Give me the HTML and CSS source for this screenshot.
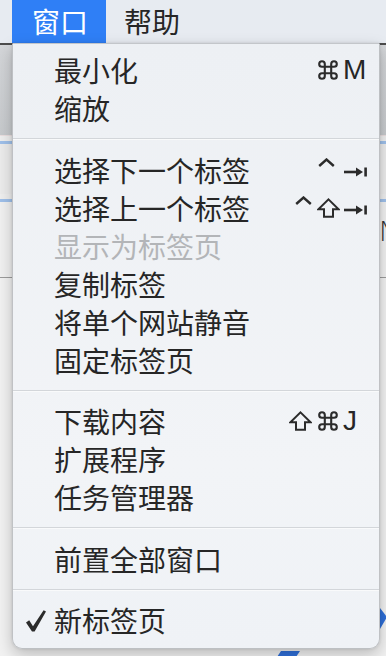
FILE: index.html
```html
<!DOCTYPE html>
<html lang="zh-CN">
<head>
<meta charset="utf-8">
<title>窗口菜单</title>
<link rel="stylesheet" href="styles.css">
</head>
<body>
<div class="menubar">
  <div class="mb-item active">窗口</div>
  <div class="mb-item">帮助</div>
</div>
<div class="window">
  <div class="toolbar"></div>
  <div class="tabline"></div>
  <div class="tabs"></div>
  <div class="tabline"></div>
  <div class="addr"><span class="ghost">N</span></div>
  <div class="divider"></div>
  <div class="page"></div>
  <svg class="deco" width="386" height="612" viewBox="0 0 386 612">
    <path d="M380 563 L387 572 L380 584 Z" fill="#2f6fd8"/>
    <path d="M281 606 L300 606 L296 612 L277 612 Z" fill="#2f6fd8"/>
  </svg>
</div>

<div class="menu">
  <div class="item"><span class="gutter"></span><span class="label">最小化</span>
    <span class="sc">
      <span class="mods">
        <svg class="i-cmd" width="20" height="20" viewBox="0 0 20 20"><path d="M6.8 6.8 V4 A2.8 2.8 0 1 0 4 6.8 H16 A2.8 2.8 0 1 0 13.2 4 V16 A2.8 2.8 0 1 0 16 13.2 H4 A2.8 2.8 0 1 0 6.8 16 Z" fill="none" stroke="#2b2b2b" stroke-width="2.1"/></svg>
      </span>
      <span class="key">M</span>
    </span>
  </div>
  <div class="item"><span class="gutter"></span><span class="label">缩放</span></div>
  <div class="sep"></div>
  <div class="item"><span class="gutter"></span><span class="label">选择下一个标签</span>
    <span class="sc">
      <span class="mods">
        <svg class="i-ctrl" width="17" height="9" viewBox="0 0 17 9"><polyline points="1.2,8 8.5,1.5 15.8,8" fill="none" stroke="#2b2b2b" stroke-width="2.4"/></svg>
      </span>
      <span class="key">
        <svg class="i-tab" width="23" height="10" viewBox="0 0 23 10"><path d="M0 5 H14" stroke="#2b2b2b" stroke-width="2.6"/><path d="M12 0.6 L19 5 L12 9.4 Z" fill="#2b2b2b"/><rect x="20.3" y="0.5" width="2.6" height="9" fill="#2b2b2b"/></svg>
      </span>
    </span>
  </div>
  <div class="item"><span class="gutter"></span><span class="label">选择上一个标签</span>
    <span class="sc">
      <span class="mods">
        <svg class="i-ctrl" width="17" height="9" viewBox="0 0 17 9"><polyline points="1.2,8 8.5,1.5 15.8,8" fill="none" stroke="#2b2b2b" stroke-width="2.4"/></svg>
        <svg class="i-shift" width="23" height="20" viewBox="0 0 23 20"><path d="M11.5 1.4 L21.6 11.3 H16 V18.8 H7 V11.3 H1.4 Z" fill="none" stroke="#2b2b2b" stroke-width="2"/></svg>
      </span>
      <span class="key">
        <svg class="i-tab" width="23" height="10" viewBox="0 0 23 10"><path d="M0 5 H14" stroke="#2b2b2b" stroke-width="2.6"/><path d="M12 0.6 L19 5 L12 9.4 Z" fill="#2b2b2b"/><rect x="20.3" y="0.5" width="2.6" height="9" fill="#2b2b2b"/></svg>
      </span>
    </span>
  </div>
  <div class="item disabled"><span class="gutter"></span><span class="label">显示为标签页</span></div>
  <div class="item"><span class="gutter"></span><span class="label">复制标签</span></div>
  <div class="item"><span class="gutter"></span><span class="label">将单个网站静音</span></div>
  <div class="item"><span class="gutter"></span><span class="label">固定标签页</span></div>
  <div class="sep"></div>
  <div class="item"><span class="gutter"></span><span class="label">下载内容</span>
    <span class="sc">
      <span class="mods">
        <svg class="i-shift before-cmd" width="23" height="20" viewBox="0 0 23 20"><path d="M11.5 1.4 L21.6 11.3 H16 V18.8 H7 V11.3 H1.4 Z" fill="none" stroke="#2b2b2b" stroke-width="2"/></svg>
        <svg class="i-cmd" width="20" height="20" viewBox="0 0 20 20"><path d="M6.8 6.8 V4 A2.8 2.8 0 1 0 4 6.8 H16 A2.8 2.8 0 1 0 13.2 4 V16 A2.8 2.8 0 1 0 16 13.2 H4 A2.8 2.8 0 1 0 6.8 16 Z" fill="none" stroke="#2b2b2b" stroke-width="2.1"/></svg>
      </span>
      <span class="key">J</span>
    </span>
  </div>
  <div class="item"><span class="gutter"></span><span class="label">扩展程序</span></div>
  <div class="item"><span class="gutter"></span><span class="label">任务管理器</span></div>
  <div class="sep"></div>
  <div class="item"><span class="gutter"></span><span class="label">前置全部窗口</span></div>
  <div class="sep"></div>
  <div class="item"><span class="gutter"><svg class="check" width="22" height="24" viewBox="0 0 22 24"><path d="M1 13.5 L4.2 11.2 L8 17.2 L18.6 1.2 L21 2.4 L9.6 22.4 L7 22.6 Z" fill="#2b2b2b"/></svg></span><span class="label">新标签页</span></div>
</div>
</body>
</html>
```

FILE: styles.css
```css
html, body {
  margin: 0;
  padding: 0;
}
body {
  width: 386px;
  height: 656px;
  overflow: hidden;
  position: relative;
  background: #efefef;
  font-family: "Noto Sans CJK SC", "Noto Sans", "DejaVu Sans", sans-serif;
}

.menubar {
  height: 43px;
  display: flex;
  align-items: stretch;
  padding-left: 12px;
  background: #e7ebf1;
}
.mb-item {
  font-size: 28px;
  line-height: 43px;
  color: #262626;
  padding: 0 18px;
}
.mb-item.active {
  width: 94px;
  box-sizing: border-box;
  padding: 0 0 0 20px;
  background: #2f7ff6;
  color: #ffffff;
}

.window {
  position: relative;
  border-top: 2px solid #4c4c4c;
}
.toolbar {
  height: 90px;
  background: linear-gradient(#d4d6d9, #c7cacd);
  border-bottom: 1px solid #eadfe0;
}
.tabline {
  height: 3px;
  background: #9fc0ea;
  margin-top: 5px;
}
.tabs {
  height: 50px;
  background: #ececec;
}
.addr {
  height: 75px;
  background: #f1f1f1;
  padding-left: 379px;
}
.ghost {
  font-family: "DejaVu Sans", sans-serif;
  font-size: 26px;
  font-weight: 300;
  line-height: 60px;
  color: #333;
}
.divider {
  height: 1px;
  background: #9c9c9c;
}
.page {
  height: 400px;
  background: #f2f2f2;
}
.deco {
  position: absolute;
  left: 0;
  top: 0;
}

.menu {
  position: absolute;
  left: 12px;
  top: 43px;
  width: 368px;
  height: 606px;
  box-sizing: border-box;
  padding-top: 7px;
  background: linear-gradient(#edf0f4, #f2f4f7 70%, #eff2f6);
  border: 1px solid rgba(0, 0, 0, 0.2);
  border-top: 1px solid #c3c6ca;
  border-radius: 0 0 10px 10px;
  box-shadow: 0 6px 16px rgba(0, 0, 0, 0.22), 0 0 3px rgba(0, 0, 0, 0.12);
}

.item {
  height: 38px;
  display: flex;
  align-items: center;
  padding: 0 12px 0 12px;
  color: #262626;
  font-size: 28px;
  line-height: 38px;
}
.item.disabled {
  color: #b3b5b8;
}
.gutter {
  width: 29px;
  flex: none;
  display: flex;
  align-items: center;
}
.check {
  display: block;
  margin-top: 2px;
}
.label {
  flex: 1;
  white-space: nowrap;
}
.sc {
  display: flex;
  align-items: center;
  height: 38px;
  font-family: "Liberation Sans", "DejaVu Sans", sans-serif;
  color: #262626;
}
.mods {
  display: flex;
  align-items: center;
  justify-content: flex-end;
  height: 38px;
}
.mods svg {
  display: block;
  flex: none;
}
.i-cmd {
  margin-right: 2px;
}
.i-ctrl {
  margin-right: 5px;
  position: relative;
  top: -7px;
}
.i-shift.before-cmd {
  margin-right: 6px;
}
.key {
  width: 24px;
  margin-left: 3px;
  font-size: 28px;
  display: flex;
  align-items: center;
  height: 38px;
}
.i-tab {
  display: block;
  margin-left: 1px;
  position: relative;
  top: 2px;
}

.sep {
  height: 1px;
  background: #d3d6da;
  box-shadow: 0 1px 0 #f9fafb;
  margin: 11px 0 11.5px;
}
```
